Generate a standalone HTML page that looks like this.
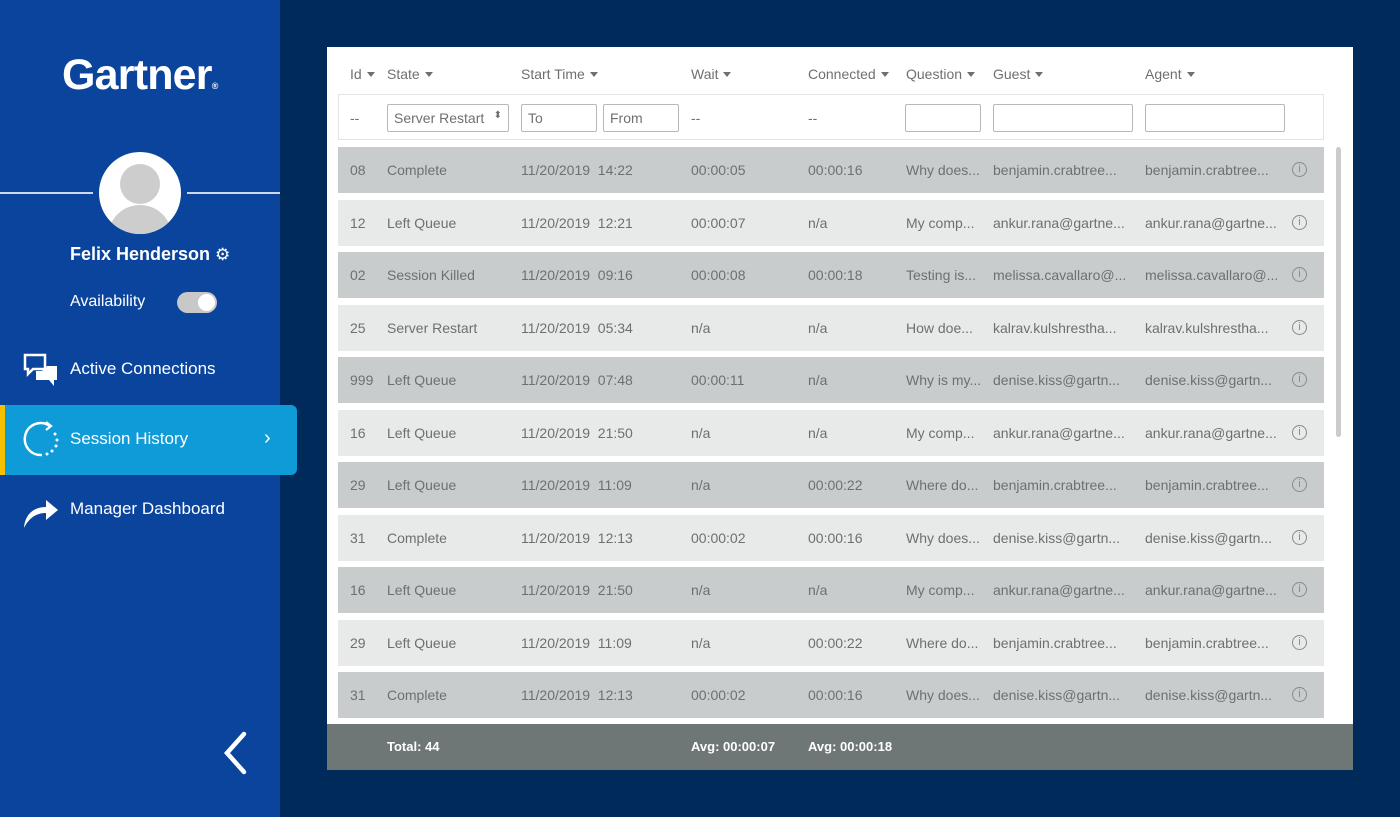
<!DOCTYPE html>
<html><head><style>
*{margin:0;padding:0;box-sizing:border-box}
body{width:1400px;height:817px;background:#002a5a;font-family:"Liberation Sans",sans-serif;position:relative;overflow:hidden}
.side{position:absolute;left:0;top:0;width:280px;height:817px;background:#0a449c}
.abs{position:absolute}
.panel{position:absolute;left:327px;top:47px;width:1026px;height:723px;background:#fff}
.t{position:absolute;font-size:14px;color:#6e7070;white-space:nowrap}
.h{position:absolute;font-size:14px;color:#6e7070;top:66px}
.row{position:absolute;left:338px;width:986px;height:46px}
.inp{position:absolute;top:104px;height:28px;border:1px solid #b8b8b8;border-radius:2px;font-size:14px;color:#6e7070;padding:5px 6px;background:#fff}
.car{display:inline-block;width:0;height:0;border-left:4px solid transparent;border-right:4px solid transparent;border-top:5px solid #6e7070;margin-left:5px;vertical-align:2px}
.nav{position:absolute;left:70px;color:#fff;font-size:17px}
</style></head><body>
<div class="side">
<div class="abs" style="left:62px;top:51px;color:#fff;font-size:43px;font-weight:bold;letter-spacing:-0.8px">Gartner<span style="font-size:9px;letter-spacing:0">®</span></div>
<div class="abs" style="left:0;top:192px;width:93px;height:1.5px;background:#cfd8ea"></div>
<div class="abs" style="left:187px;top:192px;width:93px;height:1.5px;background:#cfd8ea"></div>
<div class="abs" style="left:99px;top:152px;width:82px;height:82px;border-radius:50%;background:#fff;overflow:hidden">
<div class="abs" style="left:21px;top:12px;width:40px;height:40px;border-radius:50%;background:#cdcdcd"></div>
<div class="abs" style="left:9px;top:53px;width:64px;height:40px;border-radius:32px 32px 0 0;background:#cdcdcd"></div>
</div>
<div class="abs" style="left:70px;top:244px;color:#fff;font-size:18px;font-weight:bold">Felix Henderson <span style="font-weight:normal;font-size:17px">⚙</span></div>
<div class="abs" style="left:70px;top:293px;color:#fff;font-size:16px">Availability</div>
<div class="abs" style="left:177px;top:292px;width:40px;height:21px;border-radius:11px;background:#c8c8c8"><div class="abs" style="left:21px;top:2px;width:17px;height:17px;border-radius:50%;background:#fff"></div></div>
<svg class="abs" style="left:22px;top:352px" width="38" height="36" viewBox="0 0 38 36"><path d="M3 3h20v14H11l-5 5v-5H3z" fill="none" stroke="#fff" stroke-width="2.5"/><path d="M14 19h6l5-5h10v14h-3v6l-5-6H14z" fill="#fff"/></svg>
<div class="nav" style="top:359px">Active Connections</div>
<div class="abs" style="left:0;top:405px;width:297px;height:70px;background:#0f9bd7;border-radius:0 6px 6px 0;border-left:5px solid #f5c000"></div>
<svg class="abs" style="left:22px;top:420px" width="38" height="38" viewBox="0 0 38 38"><path d="M28 6A16 16 0 1 0 20 35" fill="none" stroke="#fff" stroke-width="2.5"/><path d="M24 2l5 4-5 4" fill="none" stroke="#fff" stroke-width="2.2"/><circle cx="33" cy="14" r="1.5" fill="#fff"/><circle cx="35" cy="20" r="1.5" fill="#fff"/><circle cx="34" cy="26" r="1.5" fill="#fff"/><circle cx="30" cy="31" r="1.5" fill="#fff"/><circle cx="25" cy="34" r="1.5" fill="#fff"/></svg>
<div class="nav" style="top:429px">Session History</div>
<div class="abs" style="left:264px;top:427px;color:#fff;font-size:20px">›</div>
<svg class="abs" style="left:22px;top:494px" width="38" height="36" viewBox="0 0 38 36"><path d="M2 34C3 20 12 13 24 13V6l12 10-12 10v-7C14 19 7 24 2 34z" fill="#fff"/></svg>
<div class="nav" style="top:499px">Manager Dashboard</div>
<svg class="abs" style="left:220px;top:730px" width="30" height="46" viewBox="0 0 30 46"><path d="M24 4L7 23l17 19" fill="none" stroke="#fff" stroke-width="4.5" stroke-linecap="round"/></svg>
</div>

<div class="panel"></div>
<div class="h" style="left:350px">Id<span class="car"></span></div>
<div class="h" style="left:387px">State<span class="car"></span></div>
<div class="h" style="left:521px">Start Time<span class="car"></span></div>
<div class="h" style="left:691px">Wait<span class="car"></span></div>
<div class="h" style="left:808px">Connected<span class="car"></span></div>
<div class="h" style="left:906px">Question<span class="car"></span></div>
<div class="h" style="left:993px">Guest<span class="car"></span></div>
<div class="h" style="left:1145px">Agent<span class="car"></span></div>
<div class="abs" style="left:338px;top:94px;width:986px;height:46px;border:1px solid #e4e4e4"></div>
<div class="t" style="left:350px;top:110px">--</div>
<div class="inp" style="left:387px;width:122px">Server Restart <span style="float:right;font-size:10px">⬍</span></div>
<div class="inp" style="left:521px;width:76px">To</div>
<div class="inp" style="left:603px;width:76px">From</div>
<div class="t" style="left:691px;top:110px">--</div>
<div class="t" style="left:808px;top:110px">--</div>
<div class="inp" style="left:905px;width:76px"></div>
<div class="inp" style="left:993px;width:140px"></div>
<div class="inp" style="left:1145px;width:140px"></div>
<div class="abs" style="left:1336px;top:147px;width:5px;height:290px;background:#c9cbcc;border-radius:3px"></div>
<div id="rows"></div>
<div class="abs" style="left:327px;top:724px;width:1026px;height:46px;background:#6f7676"></div>
<div class="abs" style="left:387px;top:739px;color:#fff;font-size:13px;font-weight:bold">Total: 44</div>
<div class="abs" style="left:691px;top:739px;color:#fff;font-size:13px;font-weight:bold">Avg: 00:00:07</div>
<div class="abs" style="left:808px;top:739px;color:#fff;font-size:13px;font-weight:bold">Avg: 00:00:18</div>
<script>
var d=[["08","Complete","11/20/2019  14:22","00:00:05","00:00:16","Why does...","benjamin.crabtree..."],
["12","Left Queue","11/20/2019  12:21","00:00:07","n/a","My comp...","ankur.rana@gartne..."],
["02","Session Killed","11/20/2019  09:16","00:00:08","00:00:18","Testing is...","melissa.cavallaro@..."],
["25","Server Restart","11/20/2019  05:34","n/a","n/a","How doe...","kalrav.kulshrestha..."],
["999","Left Queue","11/20/2019  07:48","00:00:11","n/a","Why is my...","denise.kiss@gartn..."],
["16","Left Queue","11/20/2019  21:50","n/a","n/a","My comp...","ankur.rana@gartne..."],
["29","Left Queue","11/20/2019  11:09","n/a","00:00:22","Where do...","benjamin.crabtree..."],
["31","Complete","11/20/2019  12:13","00:00:02","00:00:16","Why does...","denise.kiss@gartn..."],
["16","Left Queue","11/20/2019  21:50","n/a","n/a","My comp...","ankur.rana@gartne..."],
["29","Left Queue","11/20/2019  11:09","n/a","00:00:22","Where do...","benjamin.crabtree..."],
["31","Complete","11/20/2019  12:13","00:00:02","00:00:16","Why does...","denise.kiss@gartn..."]];
var xs=[350,387,521,691,808,906,993],h="";
d.forEach(function(r,i){var y=147+i*52.5;
h+='<div class="row" style="top:'+y+'px;background:'+(i%2?'#e8e9e9':'#c9cccd')+'"></div>';
r.forEach(function(c,j){h+='<div class="t" style="left:'+xs[j]+'px;top:'+(y+15)+'px">'+c.replace(/  /g,'&nbsp; ')+'</div>';});
h+='<div class="t" style="left:1145px;top:'+(y+15)+'px">'+r[6]+'</div>';
h+='<div class="abs" style="left:1292px;top:'+(y+15)+'px;width:15px;height:15px;border:1px solid #8a8a8a;border-radius:50%;font-size:11px;color:#8a8a8a;text-align:center;line-height:13px">i</div>';});
document.getElementById('rows').innerHTML=h;
</script>
</body></html>
